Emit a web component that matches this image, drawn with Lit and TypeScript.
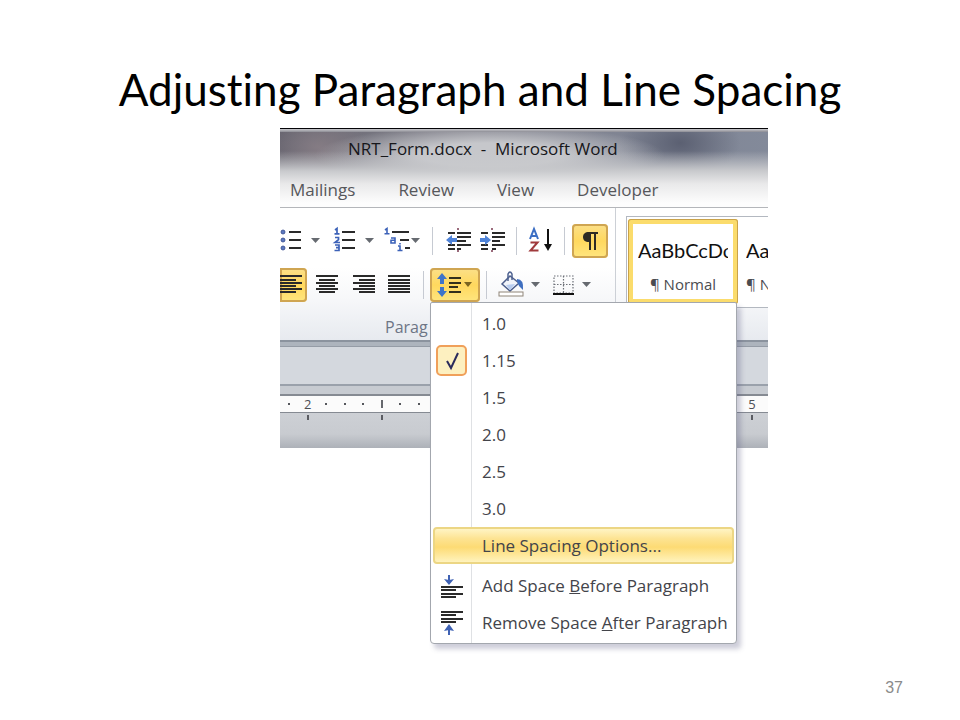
import { LitElement, html, css, svg, nothing } from "lit";
import { customElement, state } from "lit/decorators.js";

const arrow = (x: number) => svg`<path d="M${x - 4} 14h9l-4.500 5z" fill="#666a70"/>`;

const bars = (rows: number[][], color = "#2a2a2a") =>
  rows.map(([x, y, w]) => svg`<rect x=${x} y=${y} width=${w} height="2" fill=${color}/>`);

const icons: Record<string, unknown> = {
  bullets: svg`
    ${[8, 16, 24].map((y) => svg`<circle cx="3" cy=${y} r="2" fill="#5b78c0" stroke="#33498c" stroke-width="0.800"/>`)}
    ${bars([[9, 7, 12], [9, 15, 12], [9, 23, 12]])}${arrow(35)}`,
  numbering: svg`
    <g fill="none" stroke="#3c62b8" stroke-width="1.700">
      <path d="M5 6l2-1.500v5M4.500 9.800h5M5 13.500h3.500v2.200l-3.500 2.800h5M5 21h4v5.500h-4.500M6 23.700h3"/>
    </g>
    ${bars([[12, 7, 13], [12, 15, 13], [12, 23, 13]])}${arrow(39)}`,
  multilevel: svg`
    <g fill="none" stroke="#3c62b8" stroke-width="1.600">
      <path d="M5 6l2-1.500v5M4.500 9.800h5M11 14h4v5h-4v-2.800h4M18 22h2v4M17.500 26.500h5M20 19v1.500"/>
    </g>
    ${bars([[12, 7, 17], [20, 15, 9], [25, 23, 5]])}${arrow(35)}`,
  outdent: svg`
    <path d="M20 4v3M20 26v3" stroke="#7a3a50" stroke-width="1.500" stroke-dasharray="2 1"/>
    ${bars([[10, 8, 7], [19, 8, 14], [19, 12, 14], [19, 16, 9], [19, 20, 14], [10, 24, 7], [10, 20, 7], [19, 24, 4]])}
    <path d="M8 16l6-5v3h5v4h-5v3z" fill="#4f83d8"/>`,
  indent: svg`
    <path d="M18 4v3M18 26v3" stroke="#7a3a50" stroke-width="1.500" stroke-dasharray="2 1"/>
    ${bars([[7, 8, 7], [18, 8, 13], [18, 12, 13], [18, 16, 8], [18, 20, 13], [7, 24, 7], [7, 20, 7], [18, 24, 4]])}
    <path d="M17 16l-6-5v3h-5v4h5v3z" fill="#4f83d8"/>`,
  sort: svg`
    <path d="M8 15l4-10 4 10M9.500 12h5" fill="none" stroke="#3c6fc4" stroke-width="2"/>
    <path d="M8.500 18.500h7l-7 8h8" fill="none" stroke="#a03a3c" stroke-width="2"/>
    <path d="M26 5v17" stroke="#111" stroke-width="2"/><path d="M22 20h8l-4 7z" fill="#111"/>`,
  pilcrow: svg`
    <path d="M26 8v2h-2v16h-2v-16h-3v16h-2v-8c-4 0-6-2-6-5s2-5 6-5z" fill="#2d2a24"/>`,
  left: svg`${bars([[0, 7, 22], [0, 11, 16], [0, 14, 22], [0, 17, 16], [0, 20, 22], [0, 23, 16]])}`,
  center: svg`${bars([[7, 7, 22], [10, 11, 16], [7, 14, 22], [10, 17, 16], [7, 20, 22], [10, 23, 16]])}`,
  right: svg`${bars([[8, 7, 22], [14, 11, 16], [8, 14, 22], [14, 17, 16], [8, 20, 22], [14, 23, 16]])}`,
  justify: svg`${bars([[7, 7, 22], [7, 11, 22], [7, 14, 22], [7, 17, 22], [7, 20, 22], [7, 23, 22]])}`,
  spacing: svg`
    <path d="M12 5l5 6h-3v5h-4v-5h-3zM12 29l5-6h-3v-4h-4v4h-3z" fill="#3f74c9"/>
    ${bars([[19, 9, 12], [19, 14, 12], [19, 18, 9], [19, 23, 12]], "#33301c")}
    <path d="M34 14h8l-4 5z" fill="#7a6420"/>`,
  shading: svg`
    <path d="M10 16l8-8 9 7-9 8z" fill="#f1f4fa" stroke="#4d5f8c" stroke-width="1.500"/>
    <path d="M14 17l9-1-5 6z" fill="#b8cdf0"/>
    <path d="M16 13v-7q2-4 4 0v6" fill="none" stroke="#4d6190" stroke-width="1.500"/>
    <path d="M25 11q7 0 6 11l-4-4-2-5z" fill="#3f6fc0"/>
    <rect x="7" y="24" width="24" height="4" fill="#fff" stroke="#8f8579"/>
    ${arrow(43)}`,
  borders: svg`
    <g fill="none" stroke="#6d7178" stroke-width="1.200" stroke-dasharray="1.500 1.500">
      <path d="M12 8h19v17h-19zM21.500 8v17M12 16.500h19"/>
    </g>
    <rect x="11" y="25" width="21" height="2" fill="#111"/>${arrow(44)}`,
  check: svg`<path d="M9 14l4 7 7-15" fill="none" stroke="#2b2b5c" stroke-width="2"/>`,
  before: svg`
    <path d="M13 5v6" stroke="#3f62b4" stroke-width="2"/><path d="M8 9l5 1 5-1-5 6z" fill="#3f62b4"/>
    ${bars([[5, 16, 22], [5, 19, 15], [5, 23, 22], [5, 26, 15]])}`,
  after: svg`
    ${bars([[5, 4, 22], [5, 7, 15], [5, 11, 22], [5, 14, 15]])}
    <path d="M13 22v6" stroke="#3f62b4" stroke-width="2"/><path d="M8 24l5-7 5 7-5-1z" fill="#3f62b4"/>`,
};

interface Tool { id: string; label: string; size: string; on?: boolean }

const topRow: (Tool | null)[] = [
  { id: "bullets", label: "Bullets", size: "wide" },
  { id: "numbering", label: "Numbering", size: "wide" },
  { id: "multilevel", label: "Multilevel list", size: "mid" },
  null,
  { id: "outdent", label: "Decrease indent", size: "" },
  { id: "indent", label: "Increase indent", size: "" },
  null,
  { id: "sort", label: "Sort", size: "" },
  null,
  { id: "pilcrow", label: "Show paragraph marks", size: "", on: true },
];

const spacings = ["1.0", "1.15", "1.5", "2.0", "2.5", "3.0"];

@customElement("app-root")
export class AppRoot extends LitElement {
  @state() private spacing = "1.15";

  static styles = css`
    :host { display: block; font-family: "Open Sans", "Noto Sans", sans-serif; }
    * { box-sizing: border-box; }
    button { font: inherit; color: inherit; background: none; border: 0; padding: 0; margin: 0; }
    svg { display: block; flex: none; }
    .slide { min-height: 100vh; display: flex; flex-direction: column; background: #fff; }
    h1 {
      margin: 0; padding: 59px 16px 9px; text-align: center; color: #000;
      font: 400 44px/60px Lato, sans-serif; font-variant-ligatures: none;
    }
    .stage { display: grid; grid-template-columns: 280fr 488fr 192fr; }
    .shot { grid-column: 2; min-width: 0; position: relative; }
    .chrome {
      height: 80px; border-top: 1px solid #050508; border-bottom: 1px solid #b4b6ba;
      display: flex; flex-direction: column; overflow: hidden;
      background:
        linear-gradient(#c9c9cd, #8d8d95) 0 0 / 100% 3px no-repeat,
        linear-gradient(transparent 22px, #c9cacd 42px, #e9e9ea 55px, #fdfdfd 74px),
        radial-gradient(ellipse 175px 30px at 43% 26px, #c6c7cb 40%, transparent),
        radial-gradient(ellipse 60px 36px at 82% 14px, #5b6072, transparent),
        radial-gradient(ellipse 50px 30px at 8% 18px, #857c84, transparent),
        linear-gradient(90deg, #66646f, #85858f 40%, #7f8493 75%, #838a9a);
    }
    .doc { height: 42px; line-height: 40px; font-size: 17px; font-weight: 500; color: #17171b; padding-left: 68px; white-space: pre; }
    .tabs { display: flex; height: 36px; align-items: center; font-size: 17px; color: #56575b; padding-left: 10px; }
    .tabs a { color: inherit; text-decoration: none; white-space: nowrap; margin-right: 43px; }
    .ribbon { display: flex; height: 132px; background: linear-gradient(#fff 45%, #f6f7f9 70%, #e7eaef); }
    .group { width: 336px; flex: none; border-right: 1px solid #ccd0d6; padding-top: 16px; }
    .row { display: flex; height: 34px; margin-bottom: 10px; }
    .tool { width: 36px; height: 34px; flex: none; }
    .tool.wide { width: 50px; }
    .tool.mid { width: 46px; }
    .tool.edge { width: 27px; margin-right: 2px; }
    .tool.on {
      border-radius: 4px; box-shadow: inset 0 0 0 2px #cfa552;
      background: linear-gradient(#fbe08a, #ffd85e 50%, #ffe680);
    }
    .tool.on.edge { border-radius: 0 4px 4px 0; }
    .row > .tool.on:last-child { margin-left: 2px; }
    .sep { width: 12px; flex: none; display: flex; justify-content: center; }
    .sep::before { content: ""; width: 1px; margin: 3px 0; background: #c6cad2; }
    .anchor { position: relative; margin-left: 1px; width: 50px; flex: none; }
    .caption { font-size: 16px; line-height: 20px; color: #6d7585; padding: 5px 0 0 105px; }
    .gallery {
      flex: 1; min-width: 0; height: 92px; margin: 8px 0 0 10px; padding: 2px 0 0 1px; overflow: hidden;
      border: 1px solid #b3b8c0; border-right: 0; display: flex; background: #fff;
    }
    .style {
      width: 110px; height: 85px; flex: none; overflow: hidden; border-radius: 3px; padding: 0 10px;
      text-align: center; display: flex; flex-direction: column; justify-content: flex-start;
    }
    .style.on { box-shadow: inset 0 0 0 1px #c9a24a, inset 0 0 0 5px #fbdc6c; }
    .sample { font: 20px/28px Lato, sans-serif; color: #111; white-space: nowrap; overflow: hidden; margin-top: 17px; text-align: left; }
    .name { font-size: 15px; font-weight: 500; line-height: 20px; color: #4b4c50; white-space: nowrap; margin-top: 10px; }
    .style.next { padding: 0 8px; }
    .style.next .name { text-align: left; }
    .strip { height: 7px; background: #adb4bd; border-top: 2px solid #8b939e; border-bottom: 1px solid #959ca6; }
    .band { height: 39px; background: #d4d8de; border-bottom: 2px solid #9aa1ab; }
    .gap { height: 8px; background: #c7cbd1; }
    .ruler {
      display: flex; height: 19px; background: #fbfbfb; border: solid #858a92; border-width: 2px 0 1px;
      font-size: 13px; line-height: 16px; font-weight: 500; color: #4d4f55;
    }
    .marks { display: grid; grid-template-columns: repeat(8, 1fr); width: 148px; flex: none; justify-items: center; align-items: center; }
    .dot { width: 2px; height: 2px; background: #55575c; }
    .bar { width: 2px; height: 8px; background: #66686d; }
    .last { width: 32px; margin-left: auto; display: flex; justify-content: center; }
    .page { display: flex; height: 35px; background: linear-gradient(#cdd0d5, #c8cbd0 60%, #adb1b8); }
    .page .marks { align-items: start; }
    .tick { width: 2px; height: 5px; margin-top: 2px; background: #5a5c62; }
    .menu {
      position: absolute; left: 0; top: 34px; width: 307px; padding: 2px; z-index: 2;
      border: 1px solid #a3a7ae; border-radius: 2px 2px 4px 4px; color: #43444a; font-size: 17px;
      background: linear-gradient(#dfe1e4, #dfe1e4) 40px 0 / 1px 100% no-repeat, #fff;
      box-shadow: 4px 5px 5px rgba(90, 90, 130, 0.3);
    }
    .item { display: flex; align-items: center; width: 100%; height: 37px; text-align: left; white-space: nowrap; border-radius: 4px; }
    .mark { width: 31px; height: 31px; margin: 0 15px 0 3px; flex: none; display: flex; align-items: center; justify-content: center; }
    .mark.on { border: 2px solid #f0a05a; border-radius: 5px; background: #fdf0c0; }
    .item.hot {
      margin-bottom: 3px; border: 2px solid #ecd684; font-weight: 500;
      background: linear-gradient(#fff4c4, #fde391 30%, #fddb74 55%, #fff3bd);
    }
    .item.hot .mark { margin-left: 1px; }
    footer { margin-top: auto; padding: 0 57px 23px 0; text-align: right; font: 16px/18px "Liberation Sans", sans-serif; color: #8b8b8b; }
  `;

  private icon(id: string, w: number, h = 34) {
    return html`<svg width=${w} height=${h} viewBox="0 0 ${w} ${h}" aria-hidden="true">${icons[id]}</svg>`;
  }

  private tool(t: Tool) {
    const w = t.size === "wide" ? 50 : t.size === "mid" ? 46 : t.size === "edge" ? 27 : 36;
    return html`<button class="tool ${t.size} ${t.on ? "on" : ""}" aria-label=${t.label}>${this.icon(t.id, w)}</button>`;
  }

  private menu() {
    return html`<div class="menu" role="menu">
      ${spacings.map((s) => html`
        <button class="item" role="menuitemradio" aria-checked=${s === this.spacing} @click=${() => (this.spacing = s)}>
          <span class="mark ${s === this.spacing ? "on" : ""}">${s === this.spacing ? this.icon("check", 27, 27) : nothing}</span>${s}
        </button>`)}
      <button class="item hot" role="menuitem"><span class="mark"></span>Line Spacing Options...</button>
      <button class="item" role="menuitem"><span class="mark">${this.icon("before", 31, 31)}</span><span>Add Space <u>B</u>efore Paragraph</span></button>
      <button class="item" role="menuitem"><span class="mark">${this.icon("after", 31, 31)}</span><span>Remove Space <u>A</u>fter Paragraph</span></button>
    </div>`;
  }

  render() {
    return html`<main class="slide">
      <h1>Adjusting Paragraph and Line Spacing</h1>
      <div class="stage"><section class="shot">
        <header class="chrome">
          <div class="doc">NRT_Form.docx  -  Microsoft Word</div>
          <nav class="tabs">${["Mailings", "Review", "View", "Developer"].map((t) => html`<a href="#">${t}</a>`)}</nav>
        </header>
        <div class="ribbon">
          <div class="group">
            <div class="row">${topRow.map((t) => (t ? this.tool(t) : html`<i class="sep"></i>`))}</div>
            <div class="row">
              ${this.tool({ id: "left", label: "Align left", size: "edge", on: true })}
              ${this.tool({ id: "center", label: "Center", size: "" })}
              ${this.tool({ id: "right", label: "Align right", size: "" })}
              ${this.tool({ id: "justify", label: "Justify", size: "" })}
              <i class="sep"></i>
              <div class="anchor">
                ${this.tool({ id: "spacing", label: "Line spacing", size: "wide", on: true })}
                ${this.menu()}
              </div>
              <i class="sep"></i>
              ${this.tool({ id: "shading", label: "Shading", size: "wide" })}
              ${this.tool({ id: "borders", label: "Borders", size: "wide" })}
            </div>
            <div class="caption">Parag</div>
          </div>
          <div class="gallery">
            <button class="style on"><span class="sample">AaBbCcDc</span><span class="name">¶ Normal</span></button>
            <button class="style next"><span class="sample">Aa</span><span class="name">¶ N</span></button>
          </div>
        </div>
        <div class="strip"></div>
        <div class="band"></div>
        <div class="gap"></div>
        <div class="ruler">
          <div class="marks">
            <i class="dot"></i><span>2</span><i class="dot"></i><i class="dot"></i><i class="dot"></i><i class="bar"></i><i class="dot"></i><i class="dot"></i>
          </div>
          <div class="last">5</div>
        </div>
        <div class="page">
          <div class="marks"><i></i><i class="tick"></i><i></i><i></i><i></i><i class="tick"></i></div>
          <div class="last"><i class="tick"></i></div>
        </div>
      </section></div>
      <footer>37</footer>
    </main>`;
  }
}
